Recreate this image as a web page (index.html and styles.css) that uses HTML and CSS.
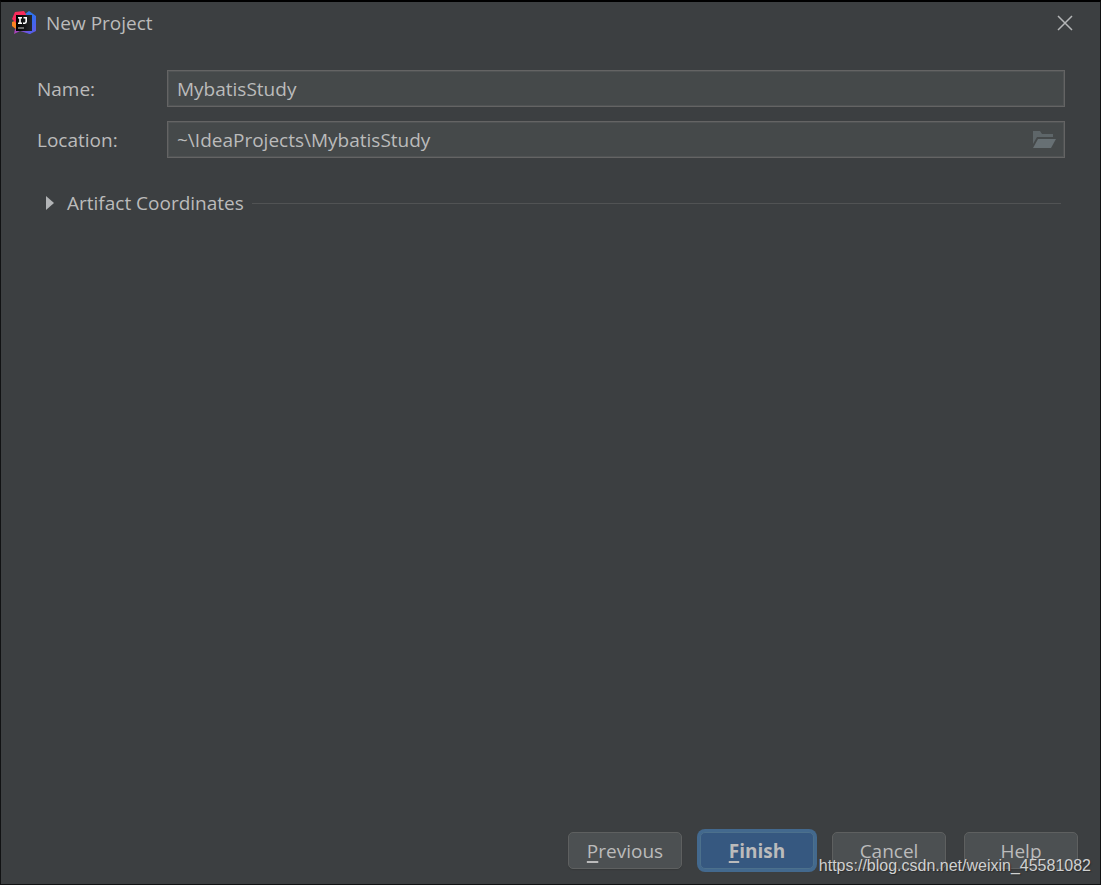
FILE: index.html
```
<!DOCTYPE html>
<html lang="en">
<head>
<meta charset="utf-8">
<title>New Project</title>
<link rel="stylesheet" href="styles.css">
</head>
<body>
<main class="dialog">
  <header class="titlebar">
    <svg class="logo" viewBox="0 0 24 24" aria-hidden="true">
      <defs>
        <linearGradient id="blue" x1="0" y1="0" x2="1" y2="1"><stop offset="0" stop-color="#2f7fd8"/><stop offset=".5" stop-color="#2f6ff0"/><stop offset="1" stop-color="#6a55e0"/></linearGradient>
        <linearGradient id="violet" x1="0" y1="0" x2="1" y2="0"><stop offset="0" stop-color="#b03fb5"/><stop offset="1" stop-color="#4f5ff0"/></linearGradient>
        <linearGradient id="tile" x1="0" y1="0" x2="1" y2="0"><stop offset="0" stop-color="#000"/><stop offset="1" stop-color="#242628"/></linearGradient>
      </defs>
      <path d="M13 3 17 0 24 5V20L18 23 11 20Z" fill="url(#blue)"/>
      <path d="M3 18 2 23 8 20 18 23 20 19Z" fill="url(#violet)"/>
      <path d="M0 11 5 9V19L0 15Z" fill="#f98420"/>
      <path d="M3 1 12 0 15 5 5 13 0 8Z" fill="#f92b5c"/>
      <path d="M4 4H20V20H4Z" fill="url(#tile)"/>
      <path d="M6 6.7H10M8 6.7V12M6 12.2H10M11.5 6.7H14.2V10.6Q14.2 12.2 12.8 12.2H11" fill="none" stroke="#fff" stroke-width="1.6"/>
      <path d="M6 17H12" stroke="#aaa" stroke-width="1.2"/>
    </svg>
    <h1 class="title">New Project</h1>
    <button class="close" type="button" aria-label="Close"><svg viewBox="0 0 16 16"><path d="M1 1 15 15M15 1 1 15" fill="none" stroke="#b4b6b7" stroke-width="1.5"/></svg></button>
  </header>
  <form class="form">
    <div class="row">
      <label for="name">Name:</label>
      <div class="field"><input id="name" type="text" value="MybatisStudy"></div>
    </div>
    <div class="row">
      <label for="location">Location:</label>
      <div class="field">
        <input id="location" type="text" value="~\IdeaProjects\MybatisStudy">
        <button class="browse" type="button" aria-label="Browse"><svg viewBox="0 0 23 17"><path d="M0 0H7L9 3H20V6H4L0 13Z" fill="#5e6669"/><path d="M5 8H23L18 17H0Z" fill="#677074"/></svg></button>
      </div>
    </div>
    <button class="section" type="button" aria-expanded="false">
      <svg class="arrow" viewBox="0 0 8 14"><path d="M0 0 8 7 0 14Z" fill="#b2b4b6"/></svg>
      <span>Artifact Coordinates</span>
      <span class="rule"></span>
    </button>
  </form>
  <footer class="actions">
    <button class="btn" type="button"><u>P</u>revious</button>
    <button class="btn primary" type="button"><u>F</u>inish</button>
    <button class="btn" type="button">Cancel</button>
    <button class="btn" type="button">Help</button>
    <span class="watermark">https://blog.csdn.net/weixin_45581082</span>
  </footer>
</main>
</body>
</html>
```
FILE: styles.css
```
* { box-sizing: border-box; }
body {
  margin: 0;
  background: #3c3f41;
  color: #bbbbbb;
  font: 19px/26px "Open Sans", "Noto Sans", sans-serif;
}
button, input { font: inherit; color: inherit; }
button { cursor: pointer; }
svg { display: block; }
.dialog {
  min-height: 100vh;
  display: flex;
  flex-direction: column;
  border: 1px solid #111213;
  border-top: 2px solid #000;
}
.titlebar {
  display: flex;
  align-items: center;
  height: 42px;
  padding: 0 27px 0 11px;
}
.logo { width: 24px; height: 24px; }
.title { flex: 1; margin: 0 0 0 10px; font-size: 19px; font-weight: 400; }
.close { padding: 0; border: 0; background: none; }
.close svg { width: 16px; height: 16px; }
.form {
  flex: 1;
  display: flex;
  flex-direction: column;
  gap: 14px;
  padding: 26px 35px 0 36px;
}
.row { display: grid; grid-template-columns: 130px 1fr; align-items: center; }
.field {
  display: flex;
  align-items: center;
  height: 37px;
  padding: 0 8px 0 9px;
  border: 1px solid #646464;
  background: #45494a;
  box-shadow: inset 0 0 0 1px #505354;
}
.field input {
  flex: 1;
  min-width: 0;
  height: 34px;
  padding: 0;
  border: 0;
  outline: 0;
  background: none;
}
.browse { padding: 0; border: 0; background: none; }
.browse svg { width: 23px; height: 17px; }
.section {
  display: flex;
  align-items: center;
  margin-top: 18px;
  padding: 0 4px 0 9px;
  border: 0;
  background: none;
}
.arrow { width: 8px; height: 14px; margin-right: 13px; }
.rule { flex: 1; height: 1px; margin-left: 8px; background: #515354; }
.actions {
  position: relative;
  display: flex;
  justify-content: flex-end;
  gap: 18px;
  padding: 0 22px 15px;
}
.btn {
  width: 114px;
  height: 37px;
  padding: 0;
  border: 1px solid #5e6060;
  border-radius: 5px;
  background: #4c5052;
  box-shadow: 0 1px 1px #36393a;
}
.btn u { text-underline-offset: 3px; text-decoration-thickness: 2px; text-decoration-skip-ink: none; }
.primary {
  border-color: #4c708c;
  background: #365880;
  box-shadow: 0 0 0 3px #43698e;
  font-weight: 700;
}
.watermark {
  position: absolute;
  right: 9px;
  bottom: 8px;
  color: #d0d1d1;
  font: 16px/20px "Liberation Sans", Arial, sans-serif;
  text-shadow: 1px 1px 1px #2c2e2f;
  pointer-events: none;
}
```
